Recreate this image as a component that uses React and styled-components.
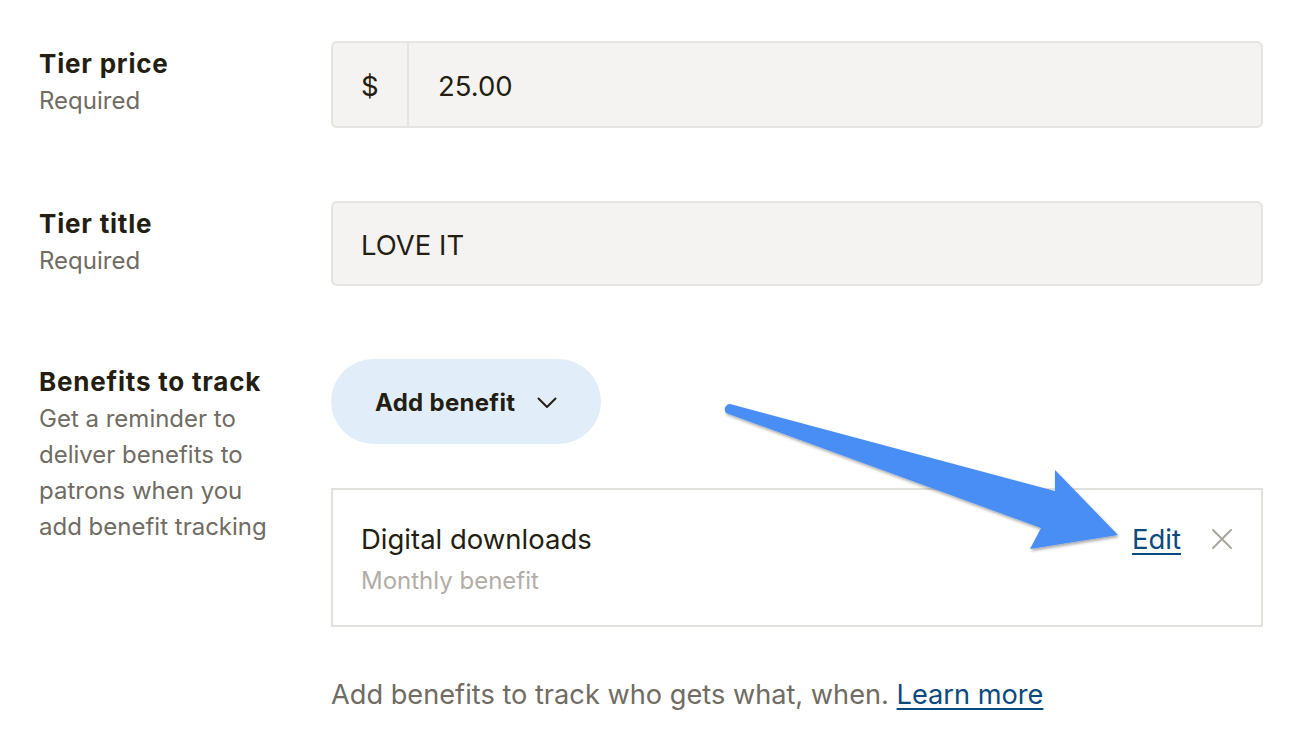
import React from "react";
import styled, { createGlobalStyle } from "styled-components";

const Global = createGlobalStyle`
  html, body { margin: 0; padding: 0; background: #ffffff; }
  body { font-family: Inter, "Noto Sans", Arial, sans-serif; color: #241e12; -webkit-font-smoothing: antialiased; }
  * { box-sizing: border-box; }
`;

const Page = styled.div`
  position: relative;
  width: 1300px;
  height: 734px;
  overflow: hidden;
  padding: 41px 37px 0 39px;
  display: flex;
  flex-direction: column;
  gap: 73px;
`;

const Row = styled.div`
  display: grid;
  grid-template-columns: 292px 932px;
  align-items: start;
`;

const Label = styled.div`
  padding-top: 4px;
  display: flex;
  flex-direction: column;
`;

const LabelTitle = styled.div`
  font-size: 26px;
  line-height: 38px;
  font-weight: 700;
  letter-spacing: 0.8px;
  color: #241e12;
`;

const LabelHint = styled.div`
  font-size: 24px;
  line-height: 36px;
  color: #706b63;
  max-width: 240px;
`;

const Field = styled.div`
  display: flex;
  align-items: stretch;
  height: ${(p) => p.$h}px;
  background: #f4f3f1;
  border: 2px solid #e6e4e0;
  border-radius: 6px;
  font-size: 27.5px;
  color: #241e12;
`;

const Prefix = styled.div`
  width: 76px;
  display: flex;
  align-items: center;
  padding-left: 28px;
  padding-top: 2px;
  border-right: 2px solid #e6e4e0;
`;

const Value = styled.div`
  display: flex;
  align-items: center;
  padding-top: 2px;
  padding-left: ${(p) => p.$pad}px;
`;

const Column = styled.div`
  display: flex;
  flex-direction: column;
  align-items: flex-start;
`;

const AddButton = styled.button`
  height: 85px;
  width: 270px;
  border: none;
  border-radius: 43px;
  background: #e1eefa;
  display: flex;
  align-items: center;
  padding: 2px 0 0 44px;
  gap: 22px;
  font-family: inherit;
  font-size: 24px;
  font-weight: 700;
  letter-spacing: 0.3px;
  color: #241e12;
  cursor: pointer;
`;

const Card = styled.div`
  margin-top: 44px;
  width: 932px;
  height: 139px;
  border: 2px solid #e3e1dd;
  display: flex;
  align-items: flex-start;
  justify-content: space-between;
  padding: 31px 28px 0 28px;
`;

const CardText = styled.div`
  display: flex;
  flex-direction: column;
`;

const CardTitle = styled.div`
  font-size: 27.5px;
  line-height: 36px;
  color: #241e12;
`;

const CardSub = styled.div`
  font-size: 24px;
  line-height: 36px;
  margin-top: 6px;
  color: #b2ada6;
`;

const Actions = styled.div`
  display: flex;
  align-items: center;
  gap: 30px;
  height: 36px;
  font-size: 27.5px;
`;

const Link = styled.a`
  color: #0b4a7d;
  text-decoration: underline;
  text-decoration-thickness: 2px;
  text-underline-offset: 4px;
  cursor: pointer;
`;

const Close = styled.span`
  display: flex;
  width: 22px;
  height: 22px;
`;

const Footer = styled.div`
  margin-top: 50px;
  font-size: 27.2px;
  line-height: 36px;
  color: #706b63;
`;

const ArrowLayer = styled.svg`
  position: absolute;
  left: 0;
  top: 0;
  pointer-events: none;
`;

export default function App() {
  return (
    <>
      <Global />
      <Page>
        <Row>
          <Label>
            <LabelTitle>Tier price</LabelTitle>
            <LabelHint>Required</LabelHint>
          </Label>
          <Field $h={87}>
            <Prefix>$</Prefix>
            <Value $pad={29}>25.00</Value>
          </Field>
        </Row>
        <Row>
          <Label>
            <LabelTitle>Tier title</LabelTitle>
            <LabelHint>Required</LabelHint>
          </Label>
          <Field $h={85}>
            <Value $pad={28}>LOVE IT</Value>
          </Field>
        </Row>
        <Row>
          <Label>
            <LabelTitle>Benefits to track</LabelTitle>
            <LabelHint>Get a reminder to deliver benefits to patrons when you add benefit tracking</LabelHint>
          </Label>
          <Column>
            <AddButton>
              Add benefit
              <svg width="20" height="12" viewBox="0 0 20 12" fill="none">
                <path d="M1.5 1.5 L10 10 L18.5 1.5" stroke="#241e12" strokeWidth="2" strokeLinecap="round" strokeLinejoin="round" />
              </svg>
            </AddButton>
            <Card>
              <CardText>
                <CardTitle>Digital downloads</CardTitle>
                <CardSub>Monthly benefit</CardSub>
              </CardText>
              <Actions>
                <Link>Edit</Link>
                <Close>
                  <svg width="22" height="22" viewBox="0 0 22 22" fill="none">
                    <path d="M2 2 L20 20 M20 2 L2 20" stroke="#a9a49d" strokeWidth="2" strokeLinecap="round" />
                  </svg>
                </Close>
              </Actions>
            </Card>
            <Footer>
              Add benefits to track who gets what, when. <Link>Learn more</Link>
            </Footer>
          </Column>
        </Row>
        <ArrowLayer width="1300" height="734" viewBox="0 0 1300 734">
          <defs>
            <filter id="sh" x="-10%" y="-10%" width="120%" height="130%">
              <feDropShadow dx="1" dy="2" stdDeviation="1.5" floodColor="#000" floodOpacity="0.35" />
            </filter>
          </defs>
          <path
            d="M727 405 Q723 408 726 413 L1041 528 L1030 549 L1118 535 L1055 470 L1055 491 L730 404 Q728 404 727 405 Z"
            fill="#4a8ef5"
            filter="url(#sh)"
          />
        </ArrowLayer>
      </Page>
    </>
  );
}
